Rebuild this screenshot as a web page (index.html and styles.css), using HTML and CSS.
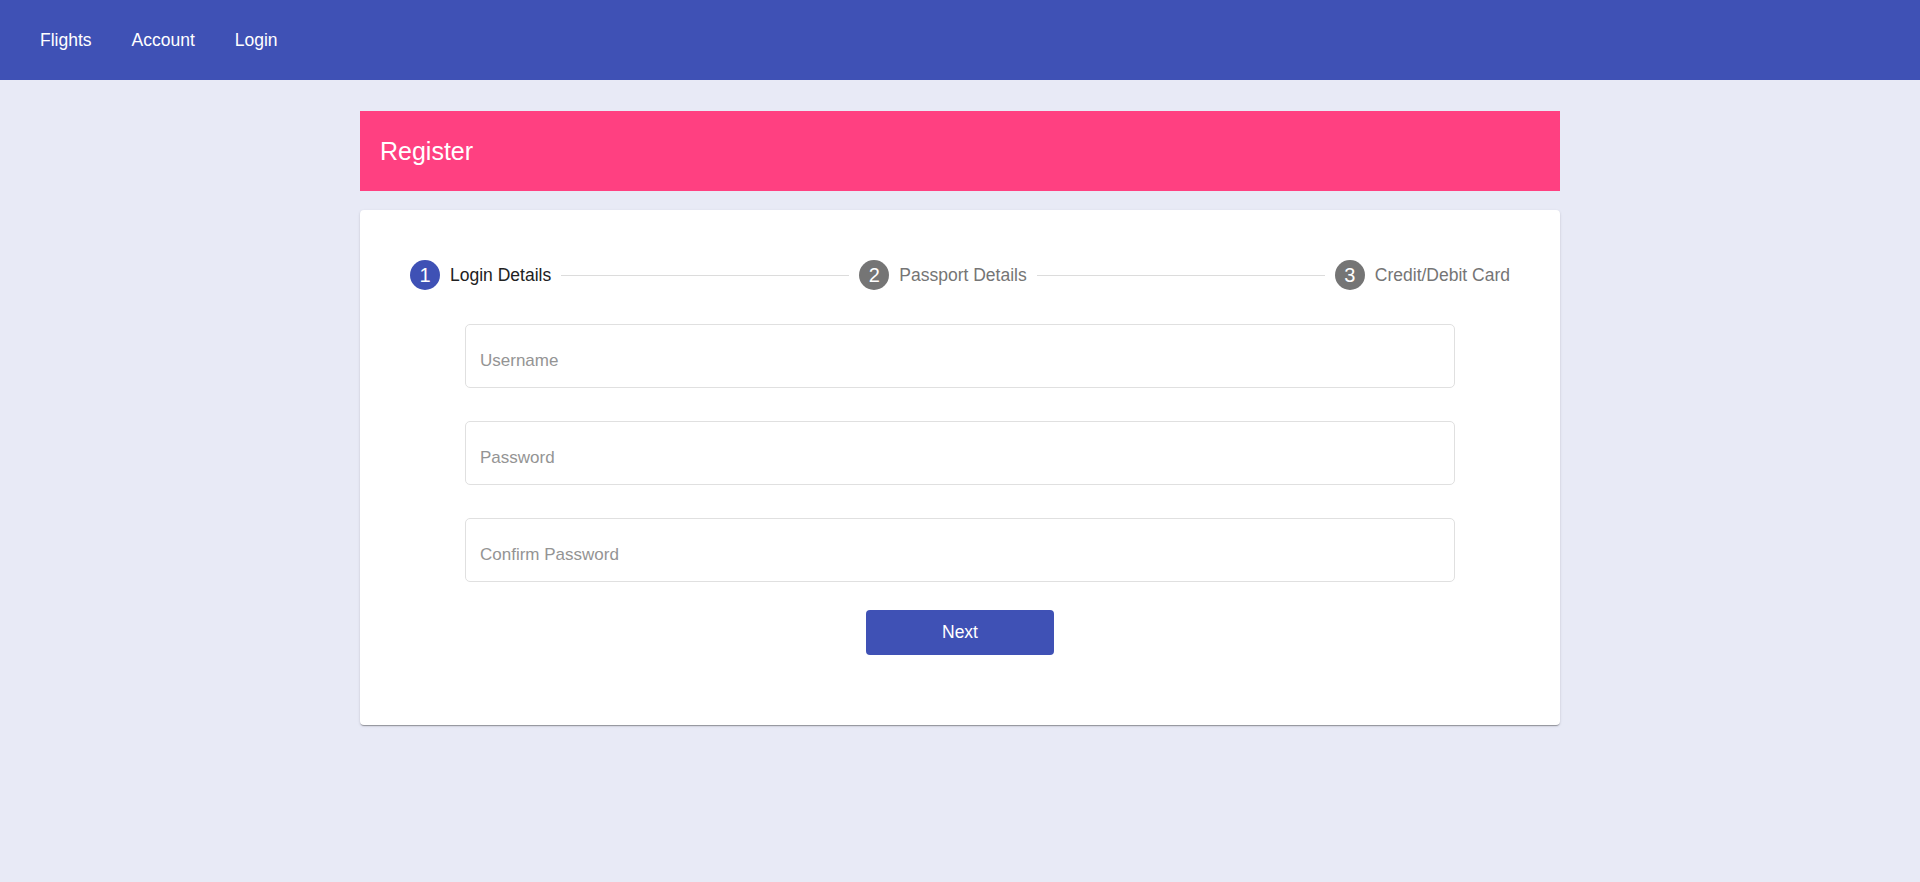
FILE: index.html
```html
<!DOCTYPE html>
<html lang="en">
<head>
<meta charset="utf-8">
<title>Register</title>
<link rel="stylesheet" href="styles.css">
</head>
<body>
<nav class="topbar">
  <a class="nav-link" href="#">Flights</a>
  <a class="nav-link" href="#">Account</a>
  <a class="nav-link" href="#">Login</a>
</nav>
<main class="page">
  <header class="title-bar">Register</header>
  <section class="card">
    <div class="stepper">
      <div class="step active"><span class="step-num">1</span><span class="step-label">Login Details</span></div>
      <div class="step-line"></div>
      <div class="step"><span class="step-num">2</span><span class="step-label">Passport Details</span></div>
      <div class="step-line"></div>
      <div class="step"><span class="step-num">3</span><span class="step-label">Credit/Debit Card</span></div>
    </div>
    <form class="form">
      <input class="field" type="text" placeholder="Username">
      <input class="field" type="password" placeholder="Password">
      <input class="field" type="password" placeholder="Confirm Password">
      <button class="btn" type="button">Next</button>
    </form>
  </section>
</main>
</body>
</html>
```
FILE: styles.css
```css
* { box-sizing: border-box; }
html, body { margin: 0; padding: 0; }
body {
  background: #e8eaf6;
  font-family: "Liberation Sans", Arial, sans-serif;
  min-height: 882px;
}
.topbar {
  height: 80px;
  background: #3f51b5;
  display: flex;
  align-items: center;
  padding: 0 20px;
}
.nav-link {
  color: #fff;
  text-decoration: none;
  font-size: 17.5px;
  padding: 0 20px;
}
.page {
  width: 1200px;
  margin: 31px auto 0;
}
.title-bar {
  height: 80px;
  background: #ff4081;
  color: #fff;
  font-size: 25px;
  display: flex;
  align-items: center;
  padding-left: 20px;
}
.card {
  margin-top: 19px;
  background: #fff;
  border-radius: 4px;
  box-shadow: 0 2px 1px -1px rgba(0,0,0,.2), 0 1px 1px 0 rgba(0,0,0,.14), 0 1px 3px 0 rgba(0,0,0,.12);
  padding: 50px 50px 70px 50px;
}
.stepper {
  display: flex;
  align-items: center;
  height: 30px;
}
.step {
  display: flex;
  align-items: center;
  gap: 10px;
}
.step-num {
  width: 30px;
  height: 30px;
  border-radius: 50%;
  background: #757575;
  color: #fff;
  font-size: 20px;
  display: flex;
  align-items: center;
  justify-content: center;
}
.step-label {
  font-size: 17.5px;
  color: #757575;
}
.step.active .step-num { background: #3f51b5; }
.step.active .step-label { color: #212121; }
.step-line {
  flex: 1;
  height: 1px;
  background: #dcdcdc;
  margin: 0 10px;
}
.form {
  width: 990px;
  margin: 34px auto 0;
  display: flex;
  flex-direction: column;
  gap: 33px;
}
.field {
  display: block;
  width: 100%;
  height: 64px;
  border: 1px solid #e0e0e0;
  border-radius: 5px;
  padding: 9px 14px 0;
  font-family: "Liberation Sans", Arial, sans-serif;
  font-size: 17px;
  color: #212121;
  outline: none;
  background: #fff;
}
.field::placeholder { color: #949494; }
.btn {
  align-self: center;
  margin-top: -5px;
  width: 188px;
  height: 45px;
  border: none;
  border-radius: 4px;
  background: #3f51b5;
  color: #fff;
  font-family: "Liberation Sans", Arial, sans-serif;
  font-size: 17.5px;
  cursor: pointer;
}
```
